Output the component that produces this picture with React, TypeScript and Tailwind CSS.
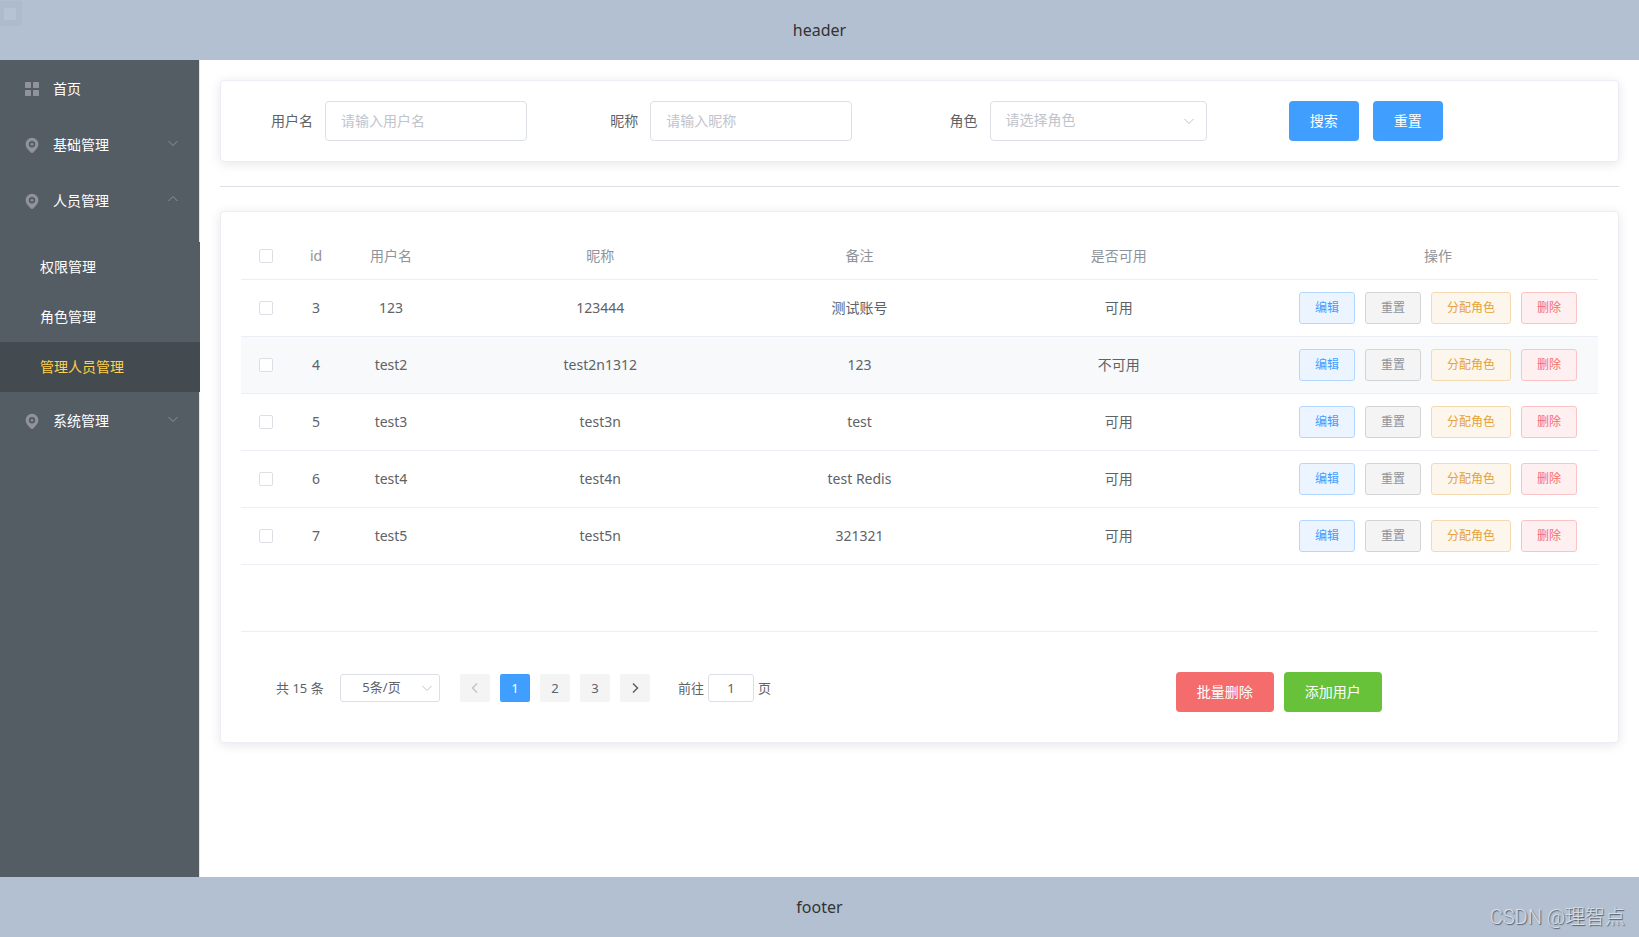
import { useState } from "react";
import type { ReactNode } from "react";

type User = {
  id: number;
  username: string;
  nickname: string;
  remark: string;
  enabled: boolean;
};

const users: User[] = [
  { id: 3, username: "123", nickname: "123444", remark: "测试账号", enabled: true },
  { id: 4, username: "test2", nickname: "test2n1312", remark: "123", enabled: false },
  { id: 5, username: "test3", nickname: "test3n", remark: "test", enabled: true },
  { id: 6, username: "test4", nickname: "test4n", remark: "test Redis", enabled: true },
  { id: 7, username: "test5", nickname: "test5n", remark: "321321", enabled: true },
];

const rowActions = [
  { label: "编辑", cls: "border-[#b3d8ff] bg-[#ecf5ff] text-[#409eff]" },
  { label: "重置", cls: "border-[#d3d4d6] bg-[#f4f4f5] text-[#909399]" },
  { label: "分配角色", cls: "border-[#f5dab1] bg-[#fdf6ec] text-[#e6a23c]" },
  { label: "删除", cls: "border-[#fbc4c4] bg-[#fef0f0] text-[#f56c6c]" },
];

function Chevron({ dir, className }: { dir: "up" | "down" | "left" | "right"; className?: string }) {
  const d = {
    up: "M1.5 8 6 3.5 10.5 8",
    down: "M1.5 4 6 8.5 10.5 4",
    left: "M8 1.5 3.5 6 8 10.5",
    right: "M4 1.5 8.5 6 4 10.5",
  }[dir];
  return (
    <svg viewBox="0 0 12 12" className={className} fill="none" stroke="currentColor" aria-hidden="true">
      <path d={d} />
    </svg>
  );
}

function GridIcon() {
  return (
    <svg viewBox="0 0 18 18" className="h-[18px] w-[18px] text-[#909399]" fill="currentColor" aria-hidden="true">
      <rect x="2" y="2" width="6" height="6" rx="0.5" />
      <rect x="10" y="2" width="6" height="6" rx="0.5" />
      <rect x="2" y="10" width="6" height="6" rx="0.5" />
      <rect x="10" y="10" width="6" height="6" rx="0.5" />
    </svg>
  );
}

function PinIcon() {
  return (
    <svg viewBox="0 0 18 18" className="h-[18px] w-[18px] text-[#909399]" aria-hidden="true">
      <path
        fill="currentColor"
        fillRule="evenodd"
        d="M9 1.800a6.400 6.400 0 0 1 6.400 6.400c0 3.100-2.700 5.400-4.600 7.800-1 1.300-2.600 1.300-3.600 0C5.300 13.600 2.600 11.300 2.600 8.200A6.400 6.400 0 0 1 9 1.800Zm0 3.200a3.200 3.200 0 1 0 0 6.400 3.200 3.200 0 0 0 0-6.400Z"
      />
      <circle cx="9" cy="8.200" r="1.300" fill="currentColor" />
    </svg>
  );
}

function MenuRow({ icon, label, arrow }: { icon: ReactNode; label: string; arrow?: "up" | "down" }) {
  return (
    <a href="#" className="flex h-14 items-center pt-0.5 pr-5 pl-[23px] text-white">
      {icon}
      <span className="ml-3 flex-1">{label}</span>
      {arrow && <Chevron dir={arrow} className="mb-1 h-3 w-3 text-[#909399]" />}
    </a>
  );
}

function Checkbox({ label, checked, onChange }: { label: string; checked: boolean; onChange: () => void }) {
  return (
    <input
      type="checkbox"
      aria-label={label}
      checked={checked}
      onChange={onChange}
      className="mx-auto block h-3.5 w-3.5 appearance-none rounded-xs border border-[#dcdfe6] bg-white checked:border-[#409eff] checked:bg-[#409eff]"
    />
  );
}

export default function App() {
  const [selected, setSelected] = useState<number[]>([]);
  const [page, setPage] = useState(1);

  const toggle = (id: number) => {
    setSelected((s) => (s.includes(id) ? s.filter((x) => x !== id) : [...s, id]));
  };
  const toggleAll = () => {
    setSelected((s) => (s.length === users.length ? [] : users.map((u) => u.id)));
  };

  return (
    <div className="flex min-h-screen flex-col bg-white text-sm text-[#606266] [font-family:'Noto_Sans','Noto_Sans_CJK_SC',sans-serif]">
      <header className="relative flex h-[60px] items-center justify-center bg-[#b3c0d1] text-base text-[#333]">
        header
        <div className="absolute top-px left-0 h-[25px] w-[22px] rounded-r-xs bg-[#aebbcb] pt-[7px] pl-1">
          <div className="h-3 w-3 rounded-xs bg-[#b6c3d4]" />
        </div>
      </header>

      <div className="flex flex-1">
        <aside className="w-[200px] shrink-0 bg-[#545c64]">
          <nav className="h-full border-r border-[#e6e6e6]">
            <MenuRow icon={<GridIcon />} label="首页" />
            <MenuRow icon={<PinIcon />} label="基础管理" arrow="down" />
            <MenuRow icon={<PinIcon />} label="人员管理" arrow="up" />
            <div className="-mr-px pt-3.5">
              <a href="#" className="flex h-[50px] items-center bg-[#545c64] pl-10 text-white">权限管理</a>
              <a href="#" className="flex h-[50px] items-center bg-[#545c64] pl-10 text-white">角色管理</a>
              <a href="#" className="flex h-[50px] items-center bg-[#434a50] pl-10 text-[#ffd04b]">管理人员管理</a>
            </div>
            <MenuRow icon={<PinIcon />} label="系统管理" arrow="down" />
          </nav>
        </aside>

        <main className="min-w-0 flex-1 p-5">
          <form
            className="grid grid-cols-4 rounded border border-[#ebeef5] bg-white p-5 shadow-[0_2px_12px_0_rgba(0,0,0,0.1)]"
            onSubmit={(e) => e.preventDefault()}
          >
            <div className="flex items-center gap-3 pl-[30px]">
              <label htmlFor="username">用户名</label>
              <input
                id="username"
                placeholder="请输入用户名"
                className="h-10 w-[202px] rounded border border-[#dcdfe6] px-[15px] pb-0.5 outline-none placeholder:text-[#c0c4cc] focus:border-[#409eff]"
              />
            </div>
            <div className="flex items-center gap-3 pl-[30px]">
              <label htmlFor="nickname">昵称</label>
              <input
                id="nickname"
                placeholder="请输入昵称"
                className="h-10 w-[202px] rounded border border-[#dcdfe6] px-[15px] pb-0.5 outline-none placeholder:text-[#c0c4cc] focus:border-[#409eff]"
              />
            </div>
            <div className="flex items-center gap-3 pl-[30px]">
              <label htmlFor="role">角色</label>
              <div className="relative">
                <select
                  id="role"
                  defaultValue=""
                  className="block h-10 w-[217px] appearance-none rounded border border-[#dcdfe6] bg-white px-[15px] pb-0.5 text-[#c0c4cc] outline-none"
                >
                  <option value="">请选择角色</option>
                </select>
                <Chevron dir="down" className="pointer-events-none absolute top-3.5 right-3 h-3 w-3 text-[#c0c4cc]" />
              </div>
            </div>
            <div className="flex items-center gap-3.5 pl-[30px]">
              <button type="submit" className="h-10 rounded bg-[#409eff] px-[21px] text-white">搜索</button>
              <button type="reset" className="h-10 rounded bg-[#409eff] px-[21px] text-white">重置</button>
            </div>
          </form>

          <hr className="my-6 border-[#dcdfe6]" />

          <section className="rounded border border-[#ebeef5] bg-white p-5 shadow-[0_2px_12px_0_rgba(0,0,0,0.1)]">
            <div className="h-[400px] border-b border-[#ebeef5]">
              <table className="w-full table-fixed border-separate border-spacing-0 text-center">
                <thead>
                  <tr className="text-[#909399] *:h-12 *:border-b *:border-[#ebeef5] *:font-normal">
                    <th className="w-[50px]">
                      <Checkbox label="全选" checked={selected.length === users.length} onChange={toggleAll} />
                    </th>
                    <th className="w-[50px]">id</th>
                    <th className="w-[100px]">用户名</th>
                    <th>昵称</th>
                    <th className="w-[200px]">备注</th>
                    <th>是否可用</th>
                    <th className="w-[320px]">操作</th>
                  </tr>
                </thead>
                <tbody>
                  {users.map((u) => (
                    <tr key={u.id} className="*:h-[57px] *:border-b *:border-[#ebeef5] nth-2:bg-[#f7f9fb]">
                      <td>
                        <Checkbox label={`选择 ${u.username}`} checked={selected.includes(u.id)} onChange={() => toggle(u.id)} />
                      </td>
                      <td>{u.id}</td>
                      <td>{u.username}</td>
                      <td>{u.nickname}</td>
                      <td>{u.remark}</td>
                      <td>{u.enabled ? "可用" : "不可用"}</td>
                      <td>
                        <div className="flex justify-center gap-2.5">
                          {rowActions.map((a) => (
                            <button
                              key={a.label}
                              type="button"
                              className={`h-8 rounded-[3px] border px-[15px] text-xs ${a.cls}`}
                            >
                              {a.label}
                            </button>
                          ))}
                        </div>
                      </td>
                    </tr>
                  ))}
                </tbody>
              </table>
            </div>

            <div className="mt-10 mb-2.5 grid grid-cols-3">
              <div className="col-span-2 flex items-start pt-0.5 pl-[35px] text-[13px] leading-7">
                <span className="w-[50px]">共 15 条</span>
                <div className="relative ml-3.5">
                  <select
                    aria-label="每页条数"
                    className="block h-7 w-[100px] appearance-none rounded-[3px] border border-[#dcdfe6] bg-white pr-[17px] pb-0.5 text-center text-[13px] leading-5 outline-none"
                  >
                    <option>5条/页</option>
                  </select>
                  <Chevron dir="down" className="pointer-events-none absolute top-2 right-[7px] h-3 w-3 text-[#c0c4cc]" />
                </div>
                <div className="ml-5 flex gap-2.5">
                  <button
                    type="button"
                    aria-label="上一页"
                    disabled={page === 1}
                    onClick={() => setPage(page - 1)}
                    className="flex h-7 w-[30px] items-center justify-center rounded-xs bg-[#f4f4f5] disabled:text-[#c0c4cc]"
                  >
                    <Chevron dir="left" className="h-3 w-3 stroke-[1.5]" />
                  </button>
                  {[1, 2, 3].map((n) => (
                    <button
                      key={n}
                      type="button"
                      onClick={() => setPage(n)}
                      className={`h-7 w-[30px] rounded-xs ${n === page ? "bg-[#409eff] text-white" : "bg-[#f4f4f5]"}`}
                    >
                      {n}
                    </button>
                  ))}
                  <button
                    type="button"
                    aria-label="下一页"
                    disabled={page === 3}
                    onClick={() => setPage(page + 1)}
                    className="flex h-7 w-[30px] items-center justify-center rounded-xs bg-[#f4f4f5] disabled:text-[#c0c4cc]"
                  >
                    <Chevron dir="right" className="h-3 w-3 stroke-[1.5]" />
                  </button>
                </div>
                <label className="ml-7 flex gap-1">
                  前往
                  <input
                    key={page}
                    defaultValue={page}
                    className="h-7 w-[46px] rounded-[3px] border border-[#dcdfe6] text-center outline-none"
                  />
                  页
                </label>
              </div>
              <div className="flex gap-2.5 pl-[30px]">
                <button type="button" className="h-10 rounded bg-[#f56c6c] px-[21px] text-white">批量删除</button>
                <button type="button" className="h-10 rounded bg-[#67c23a] px-[21px] text-white">添加用户</button>
              </div>
            </div>
          </section>
        </main>
      </div>

      <footer className="relative flex h-[60px] items-center justify-center bg-[#b3c0d1] text-base text-[#333]">
        footer
        <span className="absolute right-3.5 bottom-1.5 text-xl leading-7 text-[#d9dfe7] [font-family:Roboto,'Noto_Sans_CJK_SC',sans-serif] font-light [text-shadow:1px_1px_1px_#555c66]">
          CSDN @理智点
        </span>
      </footer>
    </div>
  );
}
